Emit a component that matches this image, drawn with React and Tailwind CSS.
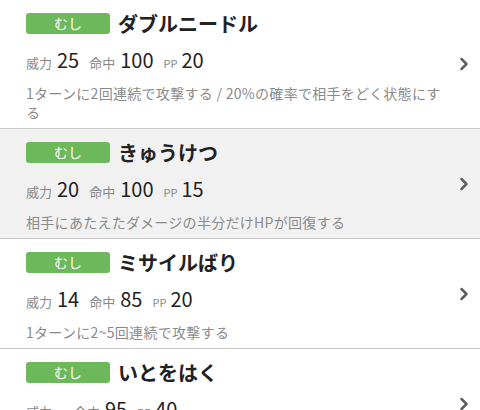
const moves = [
  {
    name: "ダブルニードル",
    power: "25",
    accuracy: "100",
    pp: "20",
    desc: "1ターンに2回連続で攻撃する / 20%の確率で相手をどく状態にする",
  },
  {
    name: "きゅうけつ",
    power: "20",
    accuracy: "100",
    pp: "15",
    desc: "相手にあたえたダメージの半分だけHPが回復する",
    active: true,
  },
  {
    name: "ミサイルばり",
    power: "14",
    accuracy: "85",
    pp: "20",
    desc: "1ターンに2~5回連続で攻撃する",
  },
  {
    name: "いとをはく",
    power: "-",
    accuracy: "95",
    pp: "40",
    desc: "相手のすばやさを2段階さげる",
  },
];

function Chevron() {
  return (
    <svg width="10" height="14" viewBox="0 0 10 14" className="shrink-0">
      <path
        d="M2.5 2 L7.5 7 L2.5 12"
        fill="none"
        stroke="#5f5f5f"
        strokeWidth="2.5"
        strokeLinecap="round"
        strokeLinejoin="round"
      />
    </svg>
  );
}

function MoveRow({ move }) {
  return (
    <div
      className={
        "flex items-center border-b border-[#c9c9c9] pl-[26px] pr-[11px] " +
        (move.active ? "bg-[#f1f1f1]" : "bg-white")
      }
    >
      <div className="flex-1 pt-[13px] pb-[6px] pr-[14px]">
        <div className="flex items-center h-[21px]">
          <span className="w-[84px] h-[21px] rounded-[3px] bg-[#6cb85a] text-white text-[14px] leading-[21px] text-center">
            むし
          </span>
          <span className="ml-[8px] text-[20px] font-bold text-[#222] leading-[24px]">
            {move.name}
          </span>
        </div>
        <div className="flex items-baseline mt-[14px] h-[24px] leading-[24px]">
          <span className="text-[13px] text-[#888]">威力</span>
          <span className="ml-[5px] text-[20px] text-[#222]">{move.power}</span>
          <span className="ml-[10px] text-[13px] text-[#888]">命中</span>
          <span className="ml-[5px] text-[20px] text-[#222]">{move.accuracy}</span>
          <span className="ml-[10px] text-[11px] text-[#888]">PP</span>
          <span className="ml-[4px] text-[20px] text-[#222]">{move.pp}</span>
        </div>
        <div className="mt-[12px] text-[14px] leading-[19px] tracking-[0.3px] text-[#8a8a8a]">
          {move.desc}
        </div>
      </div>
      <Chevron />
    </div>
  );
}

export default function App() {
  return (
    <div className="w-[480px] h-[410px] overflow-hidden bg-white font-['Noto_Sans_CJK_JP',sans-serif]">
      {moves.map((m) => (
        <MoveRow key={m.name} move={m} />
      ))}
    </div>
  );
}
